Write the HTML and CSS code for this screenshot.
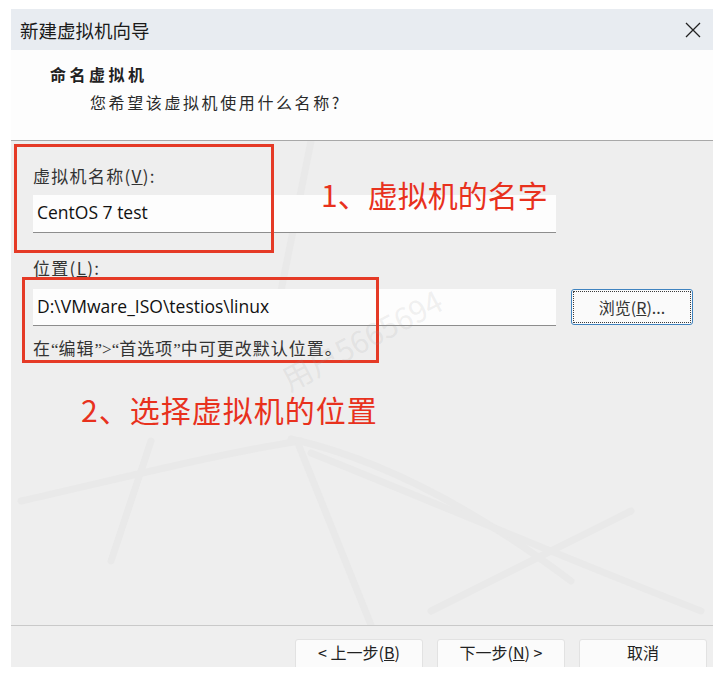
FILE: index.html
```html
<!DOCTYPE html>
<html lang="zh-CN">
<head>
  <meta charset="UTF-8" />
  <title>新建虚拟机向导</title>
  <link rel="stylesheet" href="styles.css">
</head>
<body>
  <div class="dialog">
    <div class="titlebar">
      <span class="title">新建虚拟机向导</span>
      <svg class="close" width="16" height="16" viewBox="0 0 16 16">
        <path d="M1 1 L15 15 M15 1 L1 15" stroke="#222" stroke-width="1.3" fill="none"/>
      </svg>
    </div>

    <div class="header">
      <div class="h-title">命名虚拟机</div>
      <div class="h-sub">您希望该虚拟机使用什么名称?</div>
    </div>

    <div class="content">
      <!-- faint background streaks -->
      <svg class="streaks" width="702" height="484" viewBox="0 0 702 484">
        <g stroke="#e9e9e9" stroke-width="7" fill="none" stroke-linecap="round">
          <path d="M10 360 C 120 335, 220 310, 290 300"/>
          <path d="M280 298 C 380 320, 480 380, 560 440"/>
          <path d="M300 312 C 420 360, 560 420, 690 470"/>
          <path d="M288 305 L 360 484"/>
          <path d="M140 300 L 100 420"/>
          <path d="M420 470 L 620 370"/>
          <path d="M300 0 L 270 150"/>
        </g>
      </svg>

      <label class="field-label">虚拟机名称(<u>V</u>):</label>
      <div class="input">CentOS 7 test</div>

      <label class="field-label loc-label">位置(<u>L</u>):</label>
      <div class="loc-row">
        <div class="input">D:\VMware_ISO\testios\linux</div>
        <button class="browse">浏览(<u>R</u>)...</button>
      </div>
      <p class="hint">在<span class="q">“</span>编辑<span class="q">”&gt;“</span>首选项<span class="q">”</span>中可更改默认位置。</p>

      <!-- annotations drawn over the dialog -->
      <div class="mark mark-name"></div>
      <div class="mark mark-loc"></div>
      <div class="note note-name">1、虚拟机的名字</div>
      <div class="note note-loc">2、选择虚拟机的位置</div>
      <div class="watermark">用户5665694</div>
    </div>

    <div class="footer">
      <button class="btn">&lt; 上一步(<u>B</u>)</button>
      <button class="btn">下一步(<u>N</u>) &gt;</button>
      <button class="btn">取消</button>
    </div>
  </div>
</body>
</html>
```

FILE: styles.css
```css
body {
  margin: 0;
  background: #ffffff;
  font-family: "Noto Sans CJK SC", "Noto Sans", sans-serif;
  color: #222;
}

.dialog {
  margin: 9px 0 0 11px;
  width: 702px;
  height: 658px;
  overflow: hidden;
  display: flex;
  flex-direction: column;
  background: #efefef;
}

.titlebar {
  height: 41px;
  flex: none;
  background: #e8ecf1;
  display: flex;
  align-items: center;
  justify-content: space-between;
  padding: 0 12px 0 9px;
}

.title {
  font-size: 18.5px;
  color: #1a1a1a;
}

.header {
  height: 91px;
  flex: none;
  background: #fdfdfd;
  border-bottom: 1px solid #a8a8a8;
  padding: 12px 0 0 39px;
  box-sizing: border-box;
}

.h-title {
  font-size: 16px;
  font-weight: bold;
  letter-spacing: 3.5px;
  line-height: 24px;
}

.h-sub {
  margin: 4px 0 0 40px;
  font-size: 16px;
  letter-spacing: 2.6px;
  line-height: 24px;
  color: #2a2a2a;
}

.content {
  position: relative;
  height: 484px;
  flex: none;
  padding: 24px 0 0 22px;
  box-sizing: border-box;
  background: #eeeeee;
}

.streaks {
  position: absolute;
  left: 0;
  top: 0;
  pointer-events: none;
}

.field-label {
  position: relative;
  display: block;
  font-size: 17px;
  line-height: 22px;
  letter-spacing: 1.3px;
  color: #333;
  height: 22px;
}

.input {
  position: relative;
  width: 523px;
  height: 38px;
  box-sizing: border-box;
  background: #fdfdfd;
  border-bottom: 1px solid #8d8d8d;
  padding: 0 0 0 4px;
  font-family: "Open Sans", "Noto Sans", sans-serif;
  font-size: 17.5px;
  line-height: 34px;
  color: #111;
  margin-top: 8px;
}

.loc-label {
  margin-top: 24px;
}

.loc-row {
  position: relative;
  display: flex;
  align-items: flex-start;
  gap: 15px;
  margin-top: 10px;
}

.loc-row .input {
  margin-top: 0;
  height: 37px;
}

.browse {
  width: 122px;
  height: 36px;
  background: #fafafa;
  border: 1px solid #3f83c0;
  outline: 1px dotted #3a3a3a;
  outline-offset: -3px;
  border-radius: 3px;
  font-family: "Noto Sans CJK SC", "Noto Sans", sans-serif;
  font-size: 16px;
  color: #333;
}

.hint {
  position: relative;
  margin: 10px 0 0 0;
  font-size: 17px;
  letter-spacing: 1px;
  line-height: 24px;
  color: #333;
}

.hint .q {
  font-family: "Liberation Serif", serif;
  letter-spacing: 0;
}

.mark {
  position: absolute;
  border: 3px solid #e53a26;
}

.mark-name {
  left: 3px;
  top: 3px;
  width: 254px;
  height: 103px;
}

.mark-loc {
  left: 11px;
  top: 136px;
  width: 351px;
  height: 80px;
}

.note {
  position: absolute;
  font-size: 30px;
  line-height: 40px;
  color: #e8311d;
}

.note-name {
  left: 310px;
  top: 33px;
}

.note-loc {
  left: 70px;
  top: 248px;
  letter-spacing: 1px;
}

.watermark {
  position: absolute;
  left: 262px;
  top: 176px;
  font-size: 30px;
  color: rgba(150, 150, 150, 0.14);
  transform: rotate(-28deg);
  pointer-events: none;
}

.footer {
  flex: none;
  height: 40px;
  border-top: 1px solid #c9c9c9;
  display: flex;
  justify-content: flex-end;
  gap: 14px;
  padding: 13px 6px 0 0;
  box-sizing: border-box;
  background: #efefef;
}

.btn {
  width: 128px;
  height: 36px;
  flex: none;
  background: #fbfbfb;
  border: 1px solid #e2e2e2;
  border-radius: 3px;
  font-family: "Noto Sans CJK SC", "Noto Sans", sans-serif;
  font-size: 16px;
  line-height: 20px;
  color: #222;
  padding: 0 0 10px 0;
}
```
